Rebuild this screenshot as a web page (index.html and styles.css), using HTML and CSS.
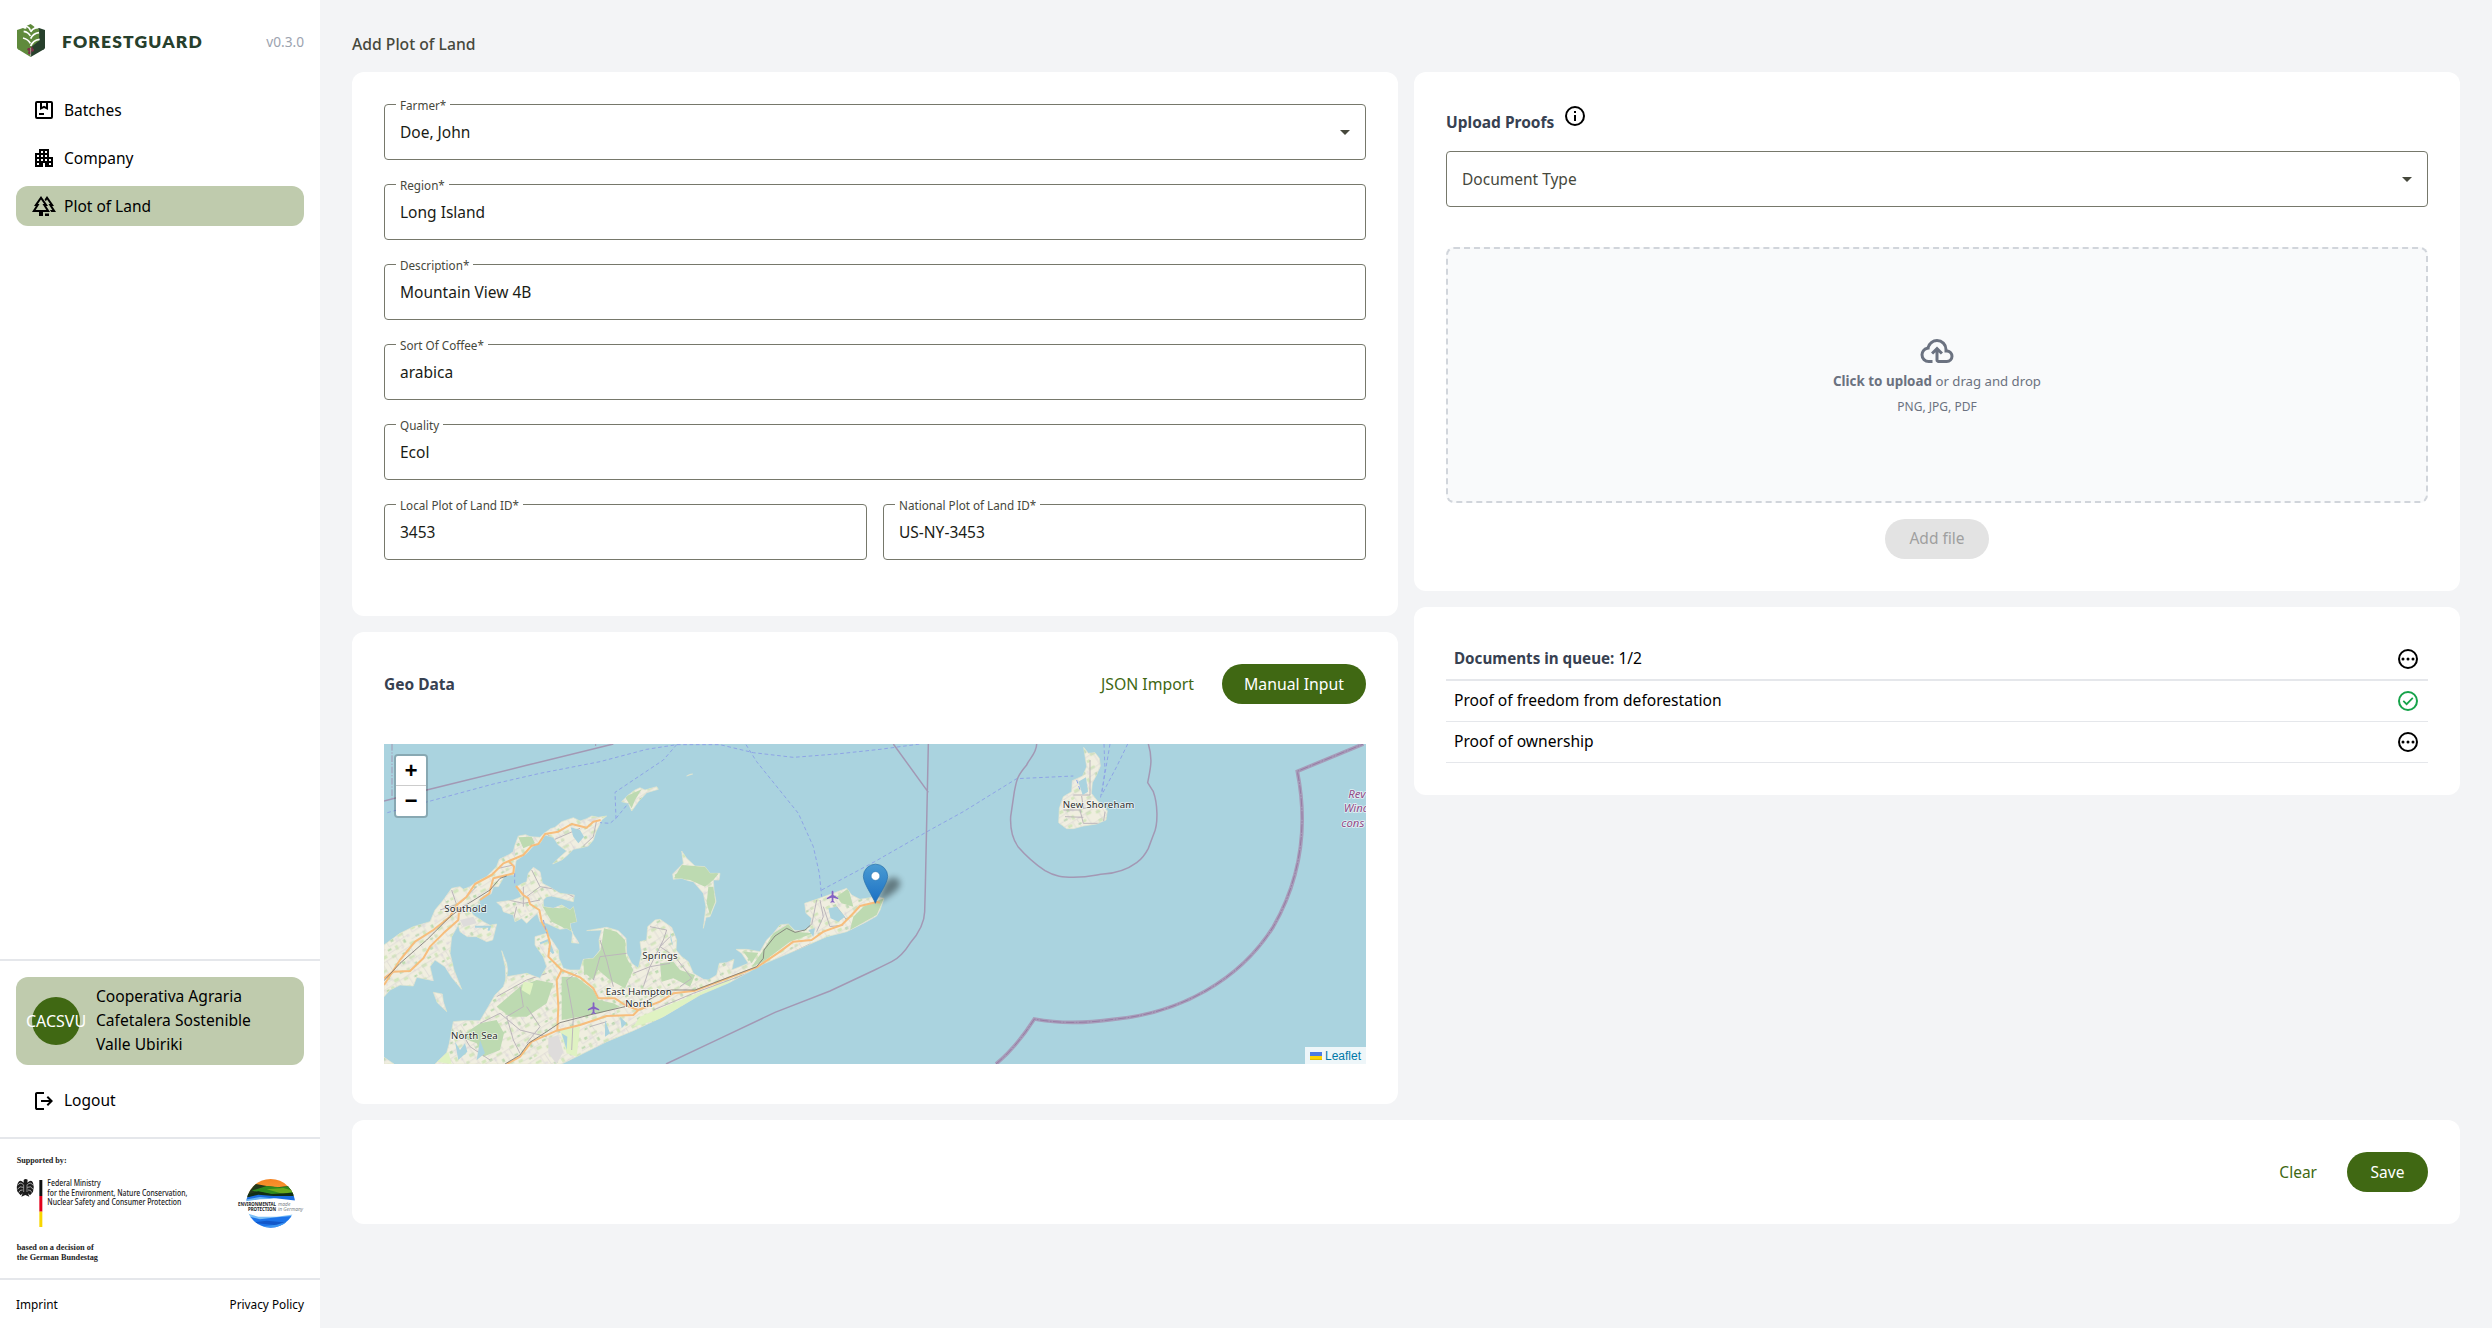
FILE: index.html
```html
<!DOCTYPE html>
<html lang="en">
<head>
<meta charset="utf-8">
<title>ForestGuard - Add Plot of Land</title>
<link rel="stylesheet" href="styles.css">
</head>
<body>
<svg class="defs" aria-hidden="true">
  <symbol id="pending" viewBox="0 0 24 24"><circle cx="12" cy="12" r="9" fill="none" stroke="currentColor" stroke-width="2"/><circle cx="7" cy="12" r="1.5"/><circle cx="12" cy="12" r="1.5"/><circle cx="17" cy="12" r="1.5"/></symbol>
  <symbol id="plane" viewBox="0 0 24 24"><path d="M21 16v-2l-8-5V3.500C13 2.670 12.330 2 11.500 2S10 2.670 10 3.500V9l-8 5v2l8-2.500V19l-2 1.500V22l3.500-1 3.500 1v-1.500L13 19v-5.500l8 2.500z"/></symbol>
</svg>
<div class="app">
  <aside class="sidebar">
    <header class="brand">
      <svg class="brand-mark" viewBox="0 0 84 99">
        <path d="M0 18 18 12 41 26V99L3 76Q0 74 0 70z" fill="#5f8a3c"/>
        <path d="M41 26 66 12 84 18V70Q84 74 81 76L41 99z" fill="#27402c"/>
        <path d="M41 0 52 8V14L66 14 67 30 66 50 44 68 41 90 38 68 18 50 17 14 28 14V6z" fill="#5f8a3c"/>
        <path d="M20 22Q34 24 40 36M18 42Q34 46 40 58M26 6Q38 10 40 20M66 26Q48 28 41 44M68 46Q48 48 41 66M56 12Q46 14 41 24" fill="none" stroke="#fff" stroke-width="5"/>
        <g fill="#7d2f49"><circle cx="36" cy="76" r="5"/><circle cx="46" cy="78" r="5"/><circle cx="38" cy="86" r="5"/><circle cx="44" cy="71" r="3"/></g>
        <path d="M41 72V97" stroke="#dfe6d5" stroke-width="1.500"/>
      </svg>
      <span class="brand-name">FORESTGUARD</span>
      <span class="version">v0.3.0</span>
    </header>
    <nav class="nav">
      <a class="nav-item"><svg class="icon" viewBox="0 0 24 24"><g fill="none" stroke="#000" stroke-width="2"><rect x="4" y="4" width="16" height="16" rx="1"/><path d="M9 4v6.400l3-1.500 3 1.500V4M7 16h5"/></g></svg>Batches</a>
      <a class="nav-item"><svg class="icon" viewBox="0 0 24 24"><path d="M17 11V3H7v4H3v14h8v-4h2v4h8V11h-4zM7 19H5v-2h2v2zm0-4H5v-2h2v2zm0-4H5V9h2v2zm4 4H9v-2h2v2zm0-4H9V9h2v2zm0-4H9V5h2v2zm4 8h-2v-2h2v2zm0-4h-2V9h2v2zm0-4h-2V5h2v2zm4 12h-2v-2h2v2zm0-4h-2v-2h2v2z"/></svg>Company</a>
      <a class="nav-item active"><svg class="icon" viewBox="0 0 24 24"><path fill-rule="evenodd" d="M16 12L9 2 2 12h1.860L0 18h7v4h4v-4h7l-3.860-6zM3.660 16l3.870-6H5.840L9 5.490 12.160 10h-1.690l3.870 6z"/><path d="M20.140 12H22L15 2l-2.390 3.410 1.220 1.740L15 5.490 18.160 10h-1.690l3.870 6h-2.400l1.290 2H24zM13 19.500h4V22h-4z"/></svg>Plot of Land</a>
    </nav>
    <section class="account">
      <div class="org"><span class="avatar">CACSVU</span><span class="org-name">Cooperativa Agraria<br>Cafetalera Sostenible<br>Valle Ubiriki</span></div>
      <a class="nav-item"><svg class="icon" viewBox="0 -960 960 960"><path d="M200-120q-33 0-56.500-23.500T120-200v-560q0-33 23.500-56.500T200-840h280v80H200v560h280v80H200Zm440-160-55-58 102-102H360v-80h327L585-622l55-58 200 200-200 200Z"/></svg><span class="lift">Logout</span></a>
    </section>
    <section class="support">
      <svg class="support-art" viewBox="0 567 960 417">
        <defs>
          <clipPath id="globe"><circle cx="812" cy="760" r="73"/></clipPath>
          <linearGradient id="sun" x1="0" x2="0" y1="0" y2="1"><stop offset="0" stop-color="#f58220"/><stop offset="1" stop-color="#f9a13a"/></linearGradient>
        </defs>
        <g class="serif" fill="#222">
          <text x="50" y="638" textLength="150" lengthAdjust="spacingAndGlyphs">Supported by:</text>
          <text x="50" y="901" textLength="231" lengthAdjust="spacingAndGlyphs">based on a decision of</text>
          <text x="50" y="929" textLength="244" lengthAdjust="spacingAndGlyphs">the German Bundestag</text>
        </g>
        <g class="ministry" fill="#222">
          <text x="142" y="709" textLength="160" lengthAdjust="spacingAndGlyphs">Federal Ministry</text>
          <text x="142" y="738" textLength="420" lengthAdjust="spacingAndGlyphs">for the Environment, Nature Conservation,</text>
          <text x="142" y="766" textLength="402" lengthAdjust="spacingAndGlyphs">Nuclear Safety and Consumer Protection</text>
        </g>
        <g fill="#1b1b1b">
          <path d="M71 690Q76 684 83 689L82 698Q94 686 99 698 104 712 99 726L90 736 84 730 88 740 76 735 64 740 68 730 62 736 53 726Q47 712 54 698 60 686 71 698z"/>
          <path d="M70 704Q60 694 53 706M82 704Q92 694 99 706M70 712Q60 706 52 718M82 712Q92 706 100 718M68 720Q60 718 56 728M84 720Q92 718 96 728" fill="none" stroke="#fff" stroke-width="1.800"/>
          <path d="M71 704V726M81 704V726" stroke="#fff" stroke-width="1.500"/>
        </g>
        <path fill="#111" d="M118 690h9v48h-9z"/><path fill="#e2001a" d="M118 738h9v47h-9z"/><path fill="#f8d600" d="M118 785h9v46h-9z"/>
        <g clip-path="url(#globe)">
          <path fill="url(#sun)" d="M735 685H890V730H735z"/>
          <path fill="#23391b" d="M735 712 768 702 800 708 830 712 890 706V740H735z"/>
          <path fill="#2f8a1e" d="M755 722 800 708 840 712 870 708 890 722V734L840 738 790 728z"/>
          <path fill="#69aa1d" d="M800 718 850 714 885 724 850 732z"/>
          <path fill="#122e15" d="M735 736 775 724 815 732 880 728V738L840 740 780 738 735 744z"/>
          <path fill="#1b6de0" d="M735 744 775 734 820 738 890 738V752L820 744 770 747 735 752z"/>
          <path fill="#6cb6f2" d="M735 749 780 741 830 746 780 748 735 754z"/>
          <path fill="#7dc0f5" d="M740 790 775 800 830 800 890 792V808L800 815 735 800z"/>
          <path fill="#1c74ea" d="M735 797 780 808 830 802 890 797V840H735z"/>
          <path fill="#1257c9" d="M750 818 800 812 870 818 830 826z"/>
          <path fill="#3c96f3" d="M780 830 830 824 870 812 850 835z"/>
        </g>
        <g class="globe-text">
          <text x="714" y="768" textLength="114" lengthAdjust="spacingAndGlyphs" fill="#222" font-weight="700">ENVIRONMENTAL</text>
          <text x="744" y="783" textLength="84" lengthAdjust="spacingAndGlyphs" fill="#222" font-weight="700">PROTECTION</text>
          <text x="834" y="768" textLength="37" lengthAdjust="spacingAndGlyphs" fill="#7b8488" font-style="italic">made</text>
          <text x="834" y="783" textLength="75" lengthAdjust="spacingAndGlyphs" fill="#7b8488" font-style="italic">in Germany</text>
        </g>
      </svg>
    </section>
    <footer class="legal"><a>Imprint</a><a>Privacy Policy</a></footer>
  </aside>

  <main class="main">
    <h1 class="title">Add Plot of Land</h1>
    <div class="columns">
      <div class="column">
        <section class="card form">
          <div class="field"><label>Farmer*</label><span>Doe, John</span><i class="caret"></i></div>
          <div class="field"><label>Region*</label><span>Long Island</span></div>
          <div class="field"><label>Description*</label><span>Mountain View 4B</span></div>
          <div class="field"><label>Sort Of Coffee*</label><span>arabica</span></div>
          <div class="field"><label>Quality</label><span>Ecol</span></div>
          <div class="field-row">
            <div class="field"><label>Local Plot of Land ID*</label><span>3453</span></div>
            <div class="field"><label>National Plot of Land ID*</label><span>US-NY-3453</span></div>
          </div>
        </section>
        <section class="card geo">
          <div class="geo-head"><h2>Geo Data</h2><div class="actions"><button class="btn text">JSON Import</button><button class="btn filled">Manual Input</button></div></div>
          <div class="map">
            <svg class="map-art" viewBox="12 12 2946 960">
              <defs>
                <path id="land" d="M12 615 60 580 100 560 150 545 165 510 190 480 215 445 240 440 250 448 270 440 290 425 320 410 350 380 358 358 385 345 400 335 405 315 415 288 437 284 450 290 480 292 492 280 512 266 525 262 545 245 580 233 600 243 620 236 635 228 655 232 680 228 665 240 658 255 648 275 640 300 625 318 610 322 580 328 560 348 545 360 518 372 535 355 560 333 535 315 520 292 495 285 480 310 460 318 440 340 408 362 402 405 375 405 355 440 340 440 333 462 312 466 296 480 300 488 270 510 280 525 310 545 330 556 350 552 338 600 320 605 290 590 262 590 240 575 235 555 215 590 210 640 222 690 245 748 215 712 195 680 165 660 150 680 160 722 110 712 100 738 60 735 30 750 12 770z
                M445 400 460 382 480 395 487 430 510 442 540 460 583 465 580 485 560 480 540 474 515 468 500 470 490 480 490 500 520 505 545 495 570 510 580 500 590 545 570 550 575 575 597 610 575 608 578 575 560 565 540 568 500 550 480 545 472 520 455 535 440 550 425 535 405 545 400 525 370 515 365 500 350 487 400 480 425 470 410 440 428 430 440 425z
                M465 590 500 580 515 600 535 630 537 655 550 685 570 690 600 690 610 658 640 655 660 630 657 600 665 570 620 572 680 562 715 572 738 595 740 640 755 670 775 685 785 640 780 605 800 600 803 560 825 540 840 538 855 548 875 562 890 600 888 630 905 650 925 665 940 700 970 718 985 720 1010 705 1018 670 1040 668 1062 658 1055 690 1080 680 1105 670 1085 640 1068 628 1100 628 1140 635 1160 600 1180 580 1200 555 1225 552 1245 572 1270 572 1290 560 1295 535 1278 520 1274 490 1310 478 1360 460 1400 445 1415 465 1440 478 1490 470 1512 475 1500 510 1490 528 1460 545 1430 560 1400 575 1340 590 1250 630 1150 672 1050 727 960 765 850 830 760 872 680 905 600 945 545 972H165L200 938 208 910 220 845 250 842 300 842 325 800 345 765 370 740 380 710 410 705 440 700 480 715 500 680 490 650 465 615z
                M12 952 42 972H12z
                M905 333 920 355 945 378 975 380 990 400 1020 400 1017 420 1000 420 1002 450 1008 485 990 530 978 532 970 565 978 500 970 460 940 425 925 422 905 415 880 418 878 402 895 385 910 370z
                M725 185 745 165 765 150 780 143 795 150 830 140 835 148 800 158 775 185 755 213 745 190z M920 108 938 102 930 103z
                M160 757 187 762 190 785 200 815 172 788z
                M365 632 380 670 383 690 378 730 376 680z
                M2111 22 2125 40 2145 38 2158 55 2161 78 2148 108 2137 128 2134 160 2150 180 2182 212 2178 240 2150 252 2110 258 2080 266 2060 266 2036 248 2038 205 2050 170 2075 155 2077 122 2108 108 2120 80z"/>
                <clipPath id="land-clip"><use href="#land"/></clipPath>
                <linearGradient id="pin" x1="0" x2="0" y1="0" y2="1"><stop offset="0" stop-color="#4a9bd2"/><stop offset="1" stop-color="#1a6fc4"/></linearGradient>
                <filter id="soft" x="-50%" y="-50%" width="200%" height="200%"><feGaussianBlur stdDeviation="9"/></filter>
                <pattern id="plots" width="94" height="76" patternUnits="userSpaceOnUse" patternTransform="rotate(-28)">
                  <path fill="#d3e6bd" d="M4 6h13v9H4zM52 8h18v8H52zM30 34h9v14h-9zM74 46h16v10H74zM8 56h14v9H8zM56 62h10v8H56z"/>
                  <path fill="#bddab1" d="M26 12h10v8H26zM60 30h8v10h-8zM6 34h12v6H6zM40 64h9v6h-9z"/>
                  <path fill="#e6e2df" d="M40 14h8v12h-8zM76 22h10v8H76zM46 46h7v7h-7z"/>
                </pattern>
                <pattern id="streets" width="82" height="70" patternUnits="userSpaceOnUse" patternTransform="rotate(-33)"><path d="M0 8H82M14 8V46H82M50 8V70M0 62H50M66 46V8" fill="none" stroke="#d3cfcf" stroke-width="1.500"/></pattern>
              </defs>
              <rect x="12" y="12" width="2946" height="960" fill="#aad3df"/>
              <use href="#land" fill="#f0eee0" stroke="#e3e5cf" stroke-width="2"/>
              <g clip-path="url(#land-clip)">
                <rect x="12" y="12" width="2200" height="960" fill="url(#plots)"/>
                <rect x="12" y="12" width="2200" height="960" fill="url(#streets)"/>
                <g fill="#bddab1">
                  <path d="M488 500 540 505 580 495 592 545 570 552 575 580 545 560 515 545z"/>
                  <path d="M672 565 710 575 735 600 738 650 760 690 735 745 690 720 655 690 640 720 615 700 612 658 640 655 662 630z"/>
                  <path d="M545 710 590 712 640 750 655 780 700 790 720 800 660 820 600 830 545 840z"/>
                  <path d="M240 890 300 850 350 840 372 880 360 930 310 950 290 910z"/>
                  <path d="M385 770 420 740 470 720 520 730 500 790 440 830 390 830 350 800z"/>
                  <path d="M840 670 880 665 900 690 945 705 930 740 880 715 845 725z"/>
                  <path d="M1115 680 1150 630 1180 580 1225 552 1245 575 1300 580 1230 605 1150 665z"/>
                  <path d="M1370 470 1405 445 1420 500 1385 490zM1420 530 1450 500 1512 475 1490 525 1410 570z"/>
                  <path d="M905 375 975 380 1015 402 1000 420 975 440 930 420 882 415z"/><path d="M985 440 1000 440 1006 485 990 525 980 490z"/>
                  <path d="M735 170 785 148 765 180 755 205zM415 292 455 290 465 310 430 325zM1090 635 1135 638 1115 670zM610 660 640 660 635 700 612 705z"/>
                </g>
                <g fill="#dff2c2"><path d="M430 725 460 730 450 765 425 750zM540 870 600 860 590 950 560 940zM780 830 960 757 1060 715 1040 735 850 835 760 860zM170 965 205 935 215 972zM330 350 360 350 350 372z"/></g>
                <g fill="#dedcdb"><path d="M505 895 535 885 550 935 530 972 505 940zM240 540 280 530 290 550 250 560zM385 330 405 325 405 350zM620 240 650 232 640 250z"/></g>
                <g fill="none" stroke="#bcb6bb" stroke-width="3">
                  <path d="M215 450 235 510M180 510 240 490 290 440M355 385 400 375M500 280 520 300 600 265M650 240 640 290 610 318M455 390 480 440 440 470M385 480 430 490 480 480M400 540 410 500M480 440 540 450 580 470M430 440 430 500"/>
                  <path d="M810 560 860 570 850 600 810 680 790 740M870 590 840 620 885 650 935 715 900 740M660 600 680 660 700 740M640 720 660 650 740 640M760 700 810 680 870 670M590 700 560 720 580 830 575 930M350 770 440 720 500 700M300 850 360 820 420 870 500 890M240 870 270 920 330 960M380 830 400 900 420 940M440 800 480 860 440 910M420 740 430 800 380 830M630 860 680 845M820 810 940 760 1130 690 1290 612M1310 480 1295 555M1330 500 1350 560 1390 555M1370 500 1400 540M1320 480 1330 530 1310 575"/>
                  <path d="M2080 165 2130 165 2130 60M2050 210H2100L2110 250H2170L2175 215M2105 168 2110 205 2150 200M2055 230 2110 232"/>
                </g>
                <path d="M285 560 330 560 325 572M480 610 505 600 520 640 505 625" fill="none" stroke="#aad3df" stroke-width="6"/>
                <g fill="#aad3df"><path d="M572 262 600 270 612 290 595 310 580 290zM2095 125 2118 112 2124 155 2108 165zM1345 505 1370 500 1395 530 1375 545 1352 535zM1285 570 1305 565 1300 590zM675 840 690 880 675 890zM720 830 740 850 725 865zM300 900 315 940 290 960zM225 905 240 930 255 910 262 935 235 960zM545 880 562 890 560 930zM870 575 880 620 872 600z"/></g>
              </g>
              <g fill="none" stroke="#f7bd7c" stroke-width="6" stroke-linejoin="round">
                <path d="M12 735 60 660 105 605 160 570 210 530 230 495 260 470 285 432 335 405 370 370 430 345 455 317 475 312 495 282 535 275 575 252 620 263 640 245 662 240"/>
                <path d="M12 715 40 695 90 693 130 655 150 620 190 580 235 540 238 500M300 480 328 460 340 415 400 400 402 380 385 362"/>
                <path d="M408 438 430 465 445 475 450 492 478 510 485 545 500 572 510 610 505 650 545 690 600 712 640 745 655 775 705 775 735 795"/>
                <path d="M545 690 530 720 535 800 532 870M380 972 420 950 455 905 530 872 600 855 680 828 760 825 775 810 735 795M775 810 840 785 880 760 945 752 1130 682 1200 635 1240 605 1295 600 1330 575 1385 555 1415 525 1440 498 1490 486 1500 488"/>
              </g>
              <g fill="none" stroke="#7b7772" stroke-width="2.500"><path d="M12 722 60 670 140 600 210 530 250 500 330 450 360 415 380 408M375 972 420 945 445 910 500 875 540 848 640 822 735 800M805 780 860 750 945 750 1130 680 1150 655 1152 630 1185 588 1220 565 1245 577 1275 570 1292 555"/></g>
              <g fill="none" stroke="#8ea4e6" stroke-width="3" stroke-dasharray="11 8">
                <path d="M22 218 140 186 340 132 480 100 660 65 800 28 890 14H1020L1120 38 1240 52 1370 42 1500 28 1620 12M890 14 850 60 705 157 708 235 690 250 660 248M708 235 745 190M1098 14 1130 65 1255 220 1300 320 1318 400 1325 470M404 400 404 438M490 540 500 580M1325 450 1484 365 1650 270 1750 215 1910 116 2080 108M2172 12 2175 90 2165 165M2190 12 2170 130 2160 180M2243 12 2210 80 2165 165"/>
                <path d="M2090 120 2100 150"/>
              </g>
              <g fill="none" stroke="#a398b4" stroke-width="4.500">
                <path d="M12 183 140 150 440 76 700 12M858 972 1000 905 1185 817 1350 753 1484 690 1500 682 1535 665Q1565 650 1590 610 1633 560 1634 515L1636 440 1645 12M1540 12 1645 157"/>
                <path d="M1970 12C1970 40 1945 60 1940 75C1910 110 1910 120 1903 155L1892 230C1890 270 1900 300 1914 320C1940 350 1970 375 1995 392C2025 410 2050 412 2080 412C2130 412 2150 404 2170 402C2210 400 2240 390 2270 368C2285 357 2295 345 2305 325L2322 280C2335 250 2333 190 2320 155L2303 128C2310 90 2320 60 2305 12"/>
                <path d="M36 12V175M647 12V18" stroke-width="3" stroke-dasharray="20 5 4 5"/>
              </g>
              <path d="M1848 972Q1910 920 1963 837 2070 857 2200 838C2400 820 2580 720 2680 560 2760 420 2785 260 2752 94L2950 12" fill="none" stroke="#a79dba" stroke-width="11"/>
              <path d="M1848 972Q1910 920 1963 837 2070 857 2200 838C2400 820 2580 720 2680 560 2760 420 2785 260 2752 94L2950 12" fill="none" stroke="#94749f" stroke-width="2.500" stroke-dasharray="26 4 5 4"/>
              <g fill="#8461c4"><use href="#plane" x="620" y="783" width="43" height="43"/><use href="#plane" x="1337" y="449" width="43" height="43"/></g>
              <g class="places">
                <text x="193" y="515" textLength="127">Southold</text>
                <text x="213" y="897" textLength="140">North Sea</text>
                <text x="787" y="656" textLength="106">Springs</text>
                <text x="677" y="764" textLength="198">East Hampton</text>
                <text x="736" y="802" textLength="81">North</text>
                <text x="2048" y="204" textLength="215">New Shoreham</text>
              </g>
              <g class="zone"><text x="2905" y="174">Rev</text><text x="2891" y="217">Wind</text><text x="2884" y="260">cons</text></g>
              <path d="M1490 488 1515 425Q1545 400 1560 425 1568 450 1490 488z" fill="#000" opacity=".42" filter="url(#soft)"/>
              <path d="M1486 490C1478 468 1450 430 1450 409A36.500 36.500 0 0 1 1523 409C1523 430 1494 468 1486 490z" fill="url(#pin)" stroke="#2a6fa8" stroke-width="2"/>
              <circle cx="1486.500" cy="408" r="13" fill="#fff" stroke="#2f76ac" stroke-width="1.500"/>
            </svg>
            <div class="zoom"><span>+</span><span>−</span></div>
            <div class="credit"><svg width="12" height="8" viewBox="0 0 12 8"><path fill="#4C7BE1" d="M0 0h12v4H0z"/><path fill="#FFD500" d="M0 4h12v3H0z"/><path fill="#E0BC00" d="M0 7h12v1H0z"/></svg> Leaflet</div>
          </div>
        </section>
      </div>
      <div class="column">
        <section class="card upload">
          <div class="upload-head"><h2>Upload Proofs</h2><svg class="icon" viewBox="0 0 24 24"><circle cx="12" cy="12" r="9" fill="none" stroke="#000" stroke-width="2"/><path d="M11 11h2v6h-2zM11 7h2v2h-2z"/></svg></div>
          <div class="field placeholder"><span>Document Type</span><i class="caret"></i></div>
          <div class="dropzone">
            <svg width="36" height="36" viewBox="0 -960 960 960" fill="#6b7280"><path d="M260-160q-91 0-155.500-63T40-377q0-78 47-139t123-78q25-92 100-149t170-57q117 0 198.500 81.500T760-520q69 8 114.500 59.500T920-340q0 75-52.500 127.500T740-160H520q-33 0-56.500-23.500T440-240v-206l-64 62-56-56 160-160 160 160-56 56-64-62v206h220q42 0 71-29t29-71q0-42-29-71t-71-29h-60v-80q0-83-58.500-141.500T480-720q-83 0-141.500 58.500T280-520h-20q-58 0-99 41t-41 99q0 58 41 99t99 41h100v80H260Z"/></svg>
            <p class="hint"><b>Click to upload</b> or drag and drop</p>
            <p class="types">PNG, JPG, PDF</p>
          </div>
          <button class="btn disabled">Add file</button>
        </section>
        <section class="card queue">
          <div class="queue-row head"><span><b>Documents in queue:</b> 1/2</span><svg class="icon"><use href="#pending"/></svg></div>
          <div class="queue-row"><span>Proof of freedom from deforestation</span><svg class="icon ok" viewBox="0 0 24 24" fill="none" stroke="currentColor" stroke-width="2"><circle cx="12" cy="12" r="9"/><path d="M7.300 11.900l3.300 3.300 6.200-6.300" stroke-width="1.700"/></svg></div>
          <div class="queue-row"><span>Proof of ownership</span><svg class="icon"><use href="#pending"/></svg></div>
        </section>
      </div>
    </div>
    <section class="card footer-bar"><button class="btn text">Clear</button><button class="btn filled">Save</button></section>
  </main>
</div>
</body>
</html>
```
FILE: styles.css
```css
* { box-sizing: border-box; }
body { margin: 0; font: 15.5px/24px "Noto Sans", "Open Sans", sans-serif; color: #000; background: #f3f4f6; }
h1, h2, p { margin: 0; }
button { font: inherit; border: 0; }
.defs { position: absolute; width: 0; height: 0; }
.icon { width: 24px; height: 24px; flex: none; display: block; }
.app { display: flex; width: 2492px; height: 1328px; overflow: hidden; }

/* Sidebar */
.sidebar { width: 320px; flex: none; background: #fff; display: flex; flex-direction: column; }
.brand { height: 90px; padding: 24px 16px 33px 17px; display: flex; align-items: center; }
.brand-mark { width: 28px; height: 33px; }
.brand-name { margin: 2px 0 0 17px; color: #27402c; font: 800 17.5px/24px Lato, sans-serif; letter-spacing: 1.15px; }
.version { margin: 2px 0 0 auto; color: #9ca3af; font-size: 13.7px; }
.nav { flex: 1; padding: 0 16px; display: flex; flex-direction: column; gap: 8px; }
.nav-item { height: 40px; padding: 0 16px; display: flex; align-items: center; gap: 8px; border-radius: 12px; }
.nav-item.active { background: #bfcbad; }
.account { height: 178px; padding: 16px; border-top: 2px solid #e5e7eb; display: flex; flex-direction: column; gap: 16px; }
.org { height: 88px; padding: 8px 16px; border-radius: 12px; background: #bfcbad; display: flex; align-items: center; gap: 16px; }
.org-name { padding-bottom: 2px; font-size: 15.6px; }
.lift { padding-bottom: 2px; }
.avatar { width: 48px; height: 48px; border-radius: 50%; background: #406813; color: #fff; font-size: 16px; display: flex; align-items: center; justify-content: center; flex: none; }
.support { height: 141px; border-top: 2px solid #e5e7eb; }
.support-art { display: block; width: 320px; height: 139px; }
.serif { font: 700 24px "Liberation Serif", serif; }
.ministry { font: 500 26px "Noto Sans", sans-serif; }
.globe-text { font-size: 14px; font-family: "Noto Sans", sans-serif; }
.legal { height: 50px; padding: 0 16px; border-top: 2px solid #e5e7eb; display: flex; justify-content: space-between; align-items: center; font-size: 11.8px; }

/* Page */
.main { flex: 1; padding: 32px; display: flex; flex-direction: column; }
.title { height: 40px; font-size: 15.7px; line-height: 24px; font-weight: 500; color: #46483c; }
.columns { display: grid; grid-template-columns: 1fr 1fr; gap: 16px; }
.column { display: flex; flex-direction: column; gap: 16px; }
.card { background: #fff; border-radius: 12px; padding: 32px; }
h2, b { font-size: 15.2px; font-weight: 700; color: #374151; }
h2 { font-size: 15.5px; }

/* Form fields */
.form { height: 544px; display: flex; flex-direction: column; gap: 24px; }
.field { position: relative; height: 56px; flex: none; border: 1px solid #76786b; border-radius: 4px; padding: 0 15px; display: flex; align-items: center; justify-content: space-between; color: #1a1c16; }
.field label { position: absolute; left: 11px; top: -8px; padding: 0 4px; background: #fff; font-size: 11.7px; line-height: 16px; color: #46483c; }
.field.placeholder { color: #46483c; }
.field-row { display: grid; grid-template-columns: 1fr 1fr; gap: 16px; }
.caret { border: 5px solid transparent; border-top-color: #46483c; border-bottom: 0; }

/* Buttons */
.btn { height: 40px; padding: 0 24px; border-radius: 20px; line-height: 24px; }
.btn.text { background: none; color: #406813; }
.btn.filled { background: #406813; color: #fff; }
.btn.disabled { background: #e3e3e3; color: #9f9f9f; }

/* Geo data */
.geo { height: 472px; }
.geo-head { height: 80px; display: flex; justify-content: space-between; }
.geo-head h2 { line-height: 40px; }
.actions { display: flex; gap: 4px; }
.actions .btn { font-size: 15.8px; }
.actions .filled { width: 144px; padding: 0; }
.map { position: relative; height: 320px; overflow: hidden; }
.map-art { display: block; width: 982px; height: 320px; }
.places { font: 29px "Noto Sans", sans-serif; fill: #2c2c2c; stroke: #ffffffb0; stroke-width: 5px; paint-order: stroke; }
.zone { font: italic 34px "Noto Sans", sans-serif; fill: #924c88; stroke: #ffffffb0; stroke-width: 5px; paint-order: stroke; }
.zoom { position: absolute; left: 10px; top: 10px; width: 34px; border: 2px solid #0003; border-radius: 4px; background-clip: padding-box; }
.zoom span { display: block; height: 30px; background: #fff; font: 700 22px/33px "Liberation Mono", monospace; text-align: center; }
.zoom span:first-child { border-bottom: 1px solid #ccc; border-radius: 2px 2px 0 0; }
.zoom span:last-child { border-radius: 0 0 2px 2px; }
.credit { position: absolute; right: 0; bottom: 0; padding: 1px 5px 0; background: #fffc; font: 12px/16px "Liberation Sans", Arial, sans-serif; color: #0078a8; }

/* Uploads */
.upload { height: 519px; display: flex; flex-direction: column; }
.upload-head { height: 47px; display: flex; gap: 9px; }
.upload-head h2 { padding-top: 6px; }
.dropzone { margin: 40px 0 16px; height: 256px; border: 2px dashed #d1d5db; border-radius: 8px; background: #f9fafb; display: flex; flex-direction: column; align-items: center; padding-top: 84px; color: #6b7280; }
.hint { margin-top: 2px; font-size: 13.2px; line-height: 20px; }
.hint b { font-size: 13.4px; color: #6b7280; }
.types { margin-top: 8px; font-size: 12px; line-height: 16px; }
.upload .btn { align-self: center; width: 104px; line-height: 22px; padding-bottom: 2px; }
.queue-row { height: 41px; padding: 0 8px; display: flex; justify-content: space-between; align-items: center; border-bottom: 1px solid #e5e7eb; }
.queue-row.head { height: 42px; border-bottom-width: 2px; }
.queue-row span { padding-bottom: 2px; font-size: 15.6px; }
.ok { color: #16a34a; }

.footer-bar { margin-top: 16px; height: 104px; display: flex; justify-content: flex-end; gap: 6px; }
.footer-bar .filled { width: 81px; padding: 0; }
```
